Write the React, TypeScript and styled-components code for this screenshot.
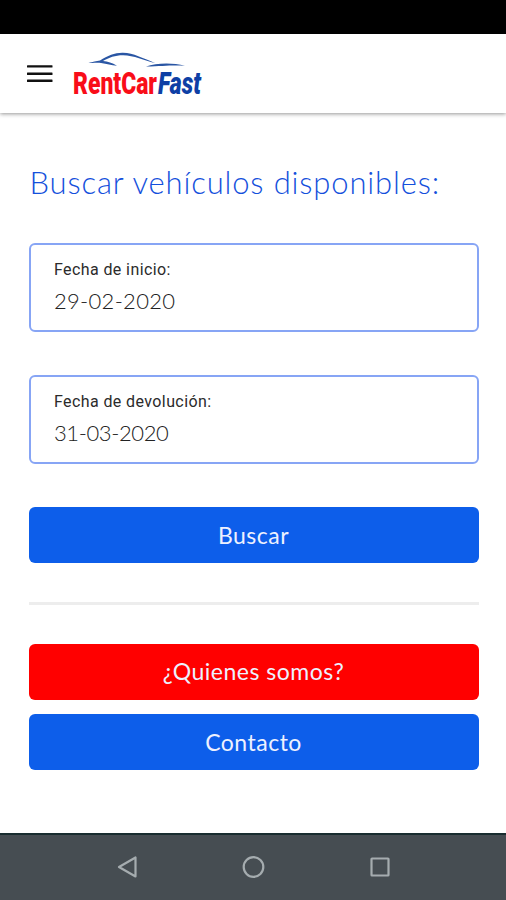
import React from 'react';
import styled, { createGlobalStyle } from 'styled-components';

const GlobalStyle = createGlobalStyle`
  * { box-sizing: border-box; }
  body { margin: 0; background: #fff; }
`;

const Screen = styled.div`
  width: 506px;
  height: 900px;
  display: flex;
  flex-direction: column;
  overflow: hidden;
  background: #fff;
  font-family: Lato, sans-serif;
`;

const StatusBar = styled.div`
  flex: 0 0 34px;
  background: #000;
`;

const Header = styled.header`
  flex: 0 0 79px;
  display: flex;
  align-items: flex-start;
  padding-left: 27px;
  background: #fff;
  box-shadow: 0 1px 4px rgba(0, 0, 0, 0.42);
`;

const MenuButton = styled.button`
  width: 26px;
  height: 18px;
  margin-top: 31px;
  padding: 0;
  border: 0;
  background: none;
  svg { display: block; }
`;

const Logo = styled.svg`
  display: block;
  margin: 14px 0 0 17px;
  overflow: visible;
`;

const Main = styled.main`
  flex: 1;
  display: flex;
  flex-direction: column;
  padding: 49px 27.5px 0 28.5px;
`;

const Title = styled.h1`
  margin: 0 0 41px 1px;
  height: 40px;
  font-size: 31px;
  line-height: 40px;
  font-weight: 300;
  letter-spacing: 0.85px;
  white-space: nowrap;
  color: #1450dc;
`;

const Field = styled.label`
  display: block;
  height: 89px;
  margin-bottom: 43px;
  padding: 14px 0 0 23.5px;
  border: 2px solid #87a5f5;
  border-radius: 6px;
`;

const FieldName = styled.span`
  display: block;
  font: 400 16px/22px Roboto, sans-serif;
  letter-spacing: 0.4px;
  color: #2b2b2b;
`;

const FieldValue = styled.span<{ $spacing: number }>`
  display: block;
  margin-top: 6px;
  font-size: 22px;
  line-height: 28px;
  font-weight: 300;
  letter-spacing: ${(p) => p.$spacing}px;
  color: #222;
`;

const Button = styled.button<{ $color?: string }>`
  flex: 0 0 56px;
  padding: 0 0 1px;
  border: 0;
  border-radius: 6px;
  background: ${(p) => p.$color ?? '#0d5eea'};
  color: #edf1ff;
  font: 400 23px/30px Lato, sans-serif;
  letter-spacing: 0.5px;
`;

const Divider = styled.hr`
  width: 100%;
  height: 3px;
  margin: 39px 0 38.5px;
  border: 0;
  background: #ededed;
`;

const Links = styled.div`
  display: flex;
  flex-direction: column;
  gap: 14.5px;
`;

const NavBar = styled.nav`
  flex: 0 0 67px;
  display: flex;
  justify-content: space-between;
  padding: 21px 114px 0 116px;
  border-top: 2px solid #192d30;
  background: #464d52;
`;

const NavIcon = styled.svg`
  width: 24px;
  height: 24px;
  fill: none;
  stroke: #a5acaf;
  stroke-width: 2.2;
  stroke-linejoin: round;
`;

export default function App() {
  return (
    <>
      <GlobalStyle />
      <Screen>
        <StatusBar />
        <Header>
          <MenuButton aria-label="Menú">
            <svg width="26" height="18" fill="#111">
              <rect y="0.2" width="25.5" height="2.4" rx="0.5" />
              <rect y="7.5" width="25.5" height="2.4" rx="0.5" />
              <rect y="14.6" width="25.5" height="2.4" rx="0.5" />
            </svg>
          </MenuButton>
          <Logo width="136" height="54" viewBox="70 48 136 54" role="img" aria-label="RentCarFast">
            <path
              d="M88.5 62.8C93 61.8 96 61.4 100 60.5C108 55.5 115 52.6 123 52.8C134 53.2 142 58 155 63C144 60.2 134 55.4 123 55.2C115 55.2 109 57.5 103 61.1C108 61.5 112 62.8 117 65.8C111 65.5 107 63.7 101 63C96 62.6 93 63.3 88.5 62.8Z"
              fill="#2a56a4"
            />
            <path d="M146 66.6C156 63 172 62.4 185 65.8C173 64.8 164 66 146 66.6Z" fill="#2a56a4" />
            <text
              x="73" y="93.5" fontFamily="Roboto, sans-serif" fontSize="31.5" fontWeight="900"
              fill="#f90d18" textLength="84" lengthAdjust="spacingAndGlyphs"
            >RentCar</text>
            <text
              x="158" y="93.5" fontFamily="Roboto, sans-serif" fontSize="31.5" fontWeight="900"
              fontStyle="italic" fill="#0e3fa5" textLength="43" lengthAdjust="spacingAndGlyphs"
            >Fast</text>
          </Logo>
        </Header>
        <Main>
          <Title>Buscar vehículos disponibles:</Title>
          <Field>
            <FieldName>Fecha de inicio:</FieldName>
            <FieldValue $spacing={0.3}>29-02-2020</FieldValue>
          </Field>
          <Field>
            <FieldName>Fecha de devolución:</FieldName>
            <FieldValue $spacing={-0.4}>31-03-2020</FieldValue>
          </Field>
          <Button>Buscar</Button>
          <Divider />
          <Links>
            <Button $color="#ff0000">¿Quienes somos?</Button>
            <Button>Contacto</Button>
          </Links>
        </Main>
        <NavBar>
          <NavIcon viewBox="0 0 24 24"><path d="M19.5 1.5V20.5L3 11Z" /></NavIcon>
          <NavIcon viewBox="0 0 24 24"><circle cx="11.5" cy="11" r="9.8" /></NavIcon>
          <NavIcon viewBox="0 0 24 24"><rect x="3.5" y="2.5" width="17" height="17" rx="0.5" /></NavIcon>
        </NavBar>
      </Screen>
    </>
  );
}
